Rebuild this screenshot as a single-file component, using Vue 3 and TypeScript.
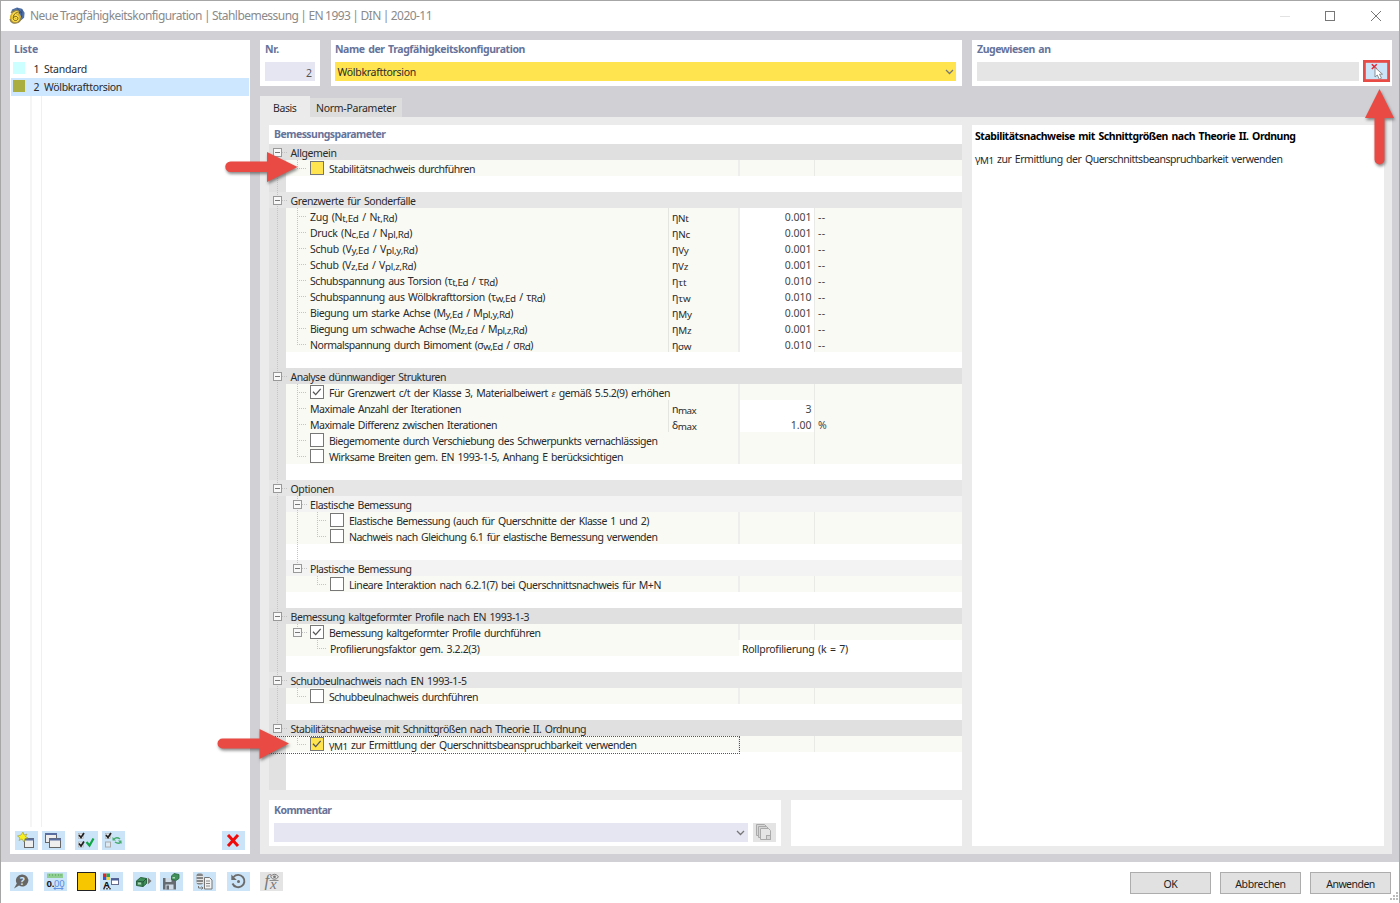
<script setup lang="ts">
interface Row {
  kind: 'head' | 'sub' | 'item' | 'blank'
  text?: string
  level?: number
  width?: number
  check?: 'off' | 'on' | 'yellow' | 'yellow-on'
  sym?: string
  symW?: number
  value?: string
  unit?: string
  choice?: string
  focus?: boolean
  dark?: boolean
}

const blank: Row = { kind: 'blank' }
const lim = (text: string, width: number, sym: string, symW: number, value: string): Row =>
  ({ kind: 'item', level: 1, text, width, sym, symW, value, unit: '--' })

const rows: Row[] = [
  { kind: 'head', text: 'Allgemein', width: 46, dark: true },
  { kind: 'item', level: 1, text: 'Stabilitätsnachweis durchführen', width: 146, check: 'yellow' },
  blank,
  { kind: 'head', text: 'Grenzwerte für Sonderfälle', width: 125 },
  lim('Zug (N_{t,Ed} / N_{t,Rd})', 87, 'η_{Nt}', 16.5, '0.001'),
  lim('Druck (N_{c,Ed} / N_{pl,Rd})', 102, 'η_{Nc}', 18, '0.001'),
  lim('Schub (V_{y,Ed} / V_{pl,y,Rd})', 107.5, 'η_{Vy}', 16.5, '0.001'),
  lim('Schub (V_{z,Ed} / V_{pl,z,Rd})', 106, 'η_{Vz}', 16, '0.001'),
  lim('Schubspannung aus Torsion (τ_{t,Ed} / τ_{Rd})', 187.5, 'η_{τt}', 14.5, '0.010'),
  lim('Schubspannung aus Wölbkrafttorsion (τ_{w,Ed} / τ_{Rd})', 235, 'η_{τw}', 18.5, '0.010'),
  lim('Biegung um starke Achse (M_{y,Ed} / M_{pl,y,Rd})', 203, 'η_{My}', 20, '0.001'),
  lim('Biegung um schwache Achse (M_{z,Ed} / M_{pl,z,Rd})', 217, 'η_{Mz}', 19.5, '0.001'),
  lim('Normalspannung durch Bimoment (σ_{w,Ed} / σ_{Rd})', 223, 'η_{σw}', 19, '0.010'),
  blank,
  { kind: 'head', text: 'Analyse dünnwandiger Strukturen', width: 155.5, dark: true },
  { kind: 'item', level: 1, text: 'Für Grenzwert c/t der Klasse 3, Materialbeiwert ~ gemäß 5.5.2(9) erhöhen', width: 341, check: 'on' },
  { kind: 'item', level: 1, text: 'Maximale Anzahl der Iterationen', width: 151, sym: 'n_{max}', symW: 24, value: '3', unit: '' },
  { kind: 'item', level: 1, text: 'Maximale Differenz zwischen Iterationen', width: 187, sym: 'δ_{max}', symW: 24.5, value: '1.00', unit: '%' },
  { kind: 'item', level: 1, text: 'Biegemomente durch Verschiebung des Schwerpunkts vernachlässigen', width: 328.5, check: 'off' },
  { kind: 'item', level: 1, text: 'Wirksame Breiten gem. EN 1993-1-5, Anhang E berücksichtigen', width: 294, check: 'off' },
  blank,
  { kind: 'head', text: 'Optionen', width: 43.5 },
  { kind: 'sub', text: 'Elastische Bemessung', width: 101.5 },
  { kind: 'item', level: 2, text: 'Elastische Bemessung (auch für Querschnitte der Klasse 1 und 2)', width: 300, check: 'off' },
  { kind: 'item', level: 2, text: 'Nachweis nach Gleichung 6.1 für elastische Bemessung verwenden', width: 308.5, check: 'off' },
  blank,
  { kind: 'sub', text: 'Plastische Bemessung', width: 101.5 },
  { kind: 'item', level: 2, text: 'Lineare Interaktion nach 6.2.1(7) bei Querschnittsnachweis für M+N', width: 312, check: 'off' },
  blank,
  { kind: 'head', text: 'Bemessung kaltgeformter Profile nach EN 1993-1-3', width: 238.5, dark: true },
  { kind: 'item', level: 1, text: 'Bemessung kaltgeformter Profile durchführen', width: 211.5, check: 'on' },
  { kind: 'item', level: 2, text: 'Profilierungsfaktor gem. 3.2.2(3)', width: 149.5, choice: 'Rollprofilierung (k = 7)' },
  blank,
  { kind: 'head', text: 'Schubbeulnachweis nach EN 1993-1-5', width: 176 },
  { kind: 'item', level: 1, text: 'Schubbeulnachweis durchführen', width: 149, check: 'off' },
  blank,
  { kind: 'head', text: 'Stabilitätsnachweise mit Schnittgrößen nach Theorie II. Ordnung', width: 295.5, dark: true },
  { kind: 'item', level: 1, text: 'γ_{M1} zur Ermittlung der Querschnittsbeanspruchbarkeit verwenden', width: 307.5, check: 'yellow-on', focus: true },
]

interface Part { t: string; c: string }
const parts = (s: string): Part[] =>
  s.split(/(_\{[^}]*\}|~)/).filter(Boolean).map((p) =>
    p === '~' ? { t: 'ε', c: 'eps' } : p.startsWith('_{') ? { t: p.slice(2, -1), c: 'low' } : { t: p, c: '' })

// Spreads or tightens the letters of a label so that it takes the given width.
const vFit = {
  mounted(el: HTMLElement, b: { value?: number }) {
    if (!b.value) return
    const n = (el.textContent ?? '').length
    const w = el.getBoundingClientRect().width
    el.style.letterSpacing = `${(b.value - w) / n}px`
  },
}

// Tree geometry, measured from the top left corner of the table (16 px rows).
const expanders = [
  [4, 0], [4, 3], [4, 14], [4, 21], [24, 22], [24, 26], [4, 29], [24, 30], [4, 33], [4, 36],
].map(([x, r]) => ({ x, y: r * 16 + 4 }))
const branches = [
  ...[1, 4, 5, 6, 7, 8, 9, 10, 11, 12, 15, 16, 17, 18, 19, 34, 37].map((r) => ({ x: 28, r })),
  ...[23, 24, 27, 31].map((r) => ({ x: 48, r })),
]
const trunks = [
  [28, 1, 1], [28, 4, 12], [28, 15, 19], [28, 22, 26], [28, 30, 30], [48, 23, 24], [48, 27, 27], [48, 31, 31], [28, 34, 34], [28, 37, 37],
]
</script>

<template>
  <div class="win">
    <header class="title">
      <svg class="logo" width="18" height="18" viewBox="0 0 18 18">
        <path d="M3 6 4 2.500 9 .6l5 1.200 2.600 4-.5 5-3 2.500-1-5-3-3z" fill="#4f71a8" />
        <path d="M5 3.500l8 2.500M9 1.500l5 4.500M14 2.500l-.5 8" stroke="#2d4878" stroke-width=".8" />
        <path d="M10.500 3.500C4 4 1.500 7.500 2 12c.8 4 4.500 5 8 3.500 3.500-1.700 4-6.500 1-8.500z" fill="#d8b02c" />
        <path d="M2 12c.8 4 4.500 5 8 3.500 2-1 3-3 3-5M3 6c1.500-2 4-3 7-2.500" fill="none" stroke="#8d8052" stroke-width="1.300" />
        <path d="M9.500 5.500C6.500 6 5 8.500 5.200 11.500c.3 2.800 4.600 2.700 4.700 0 0-2.600-3.500-2.800-4.500-.6" fill="none" stroke="#ffe04a" stroke-width="2.800" />
        <path d="M9.500 5.500C6.500 6 5 8.500 5.200 11.500c.3 2.800 4.600 2.700 4.700 0 0-2.600-3.500-2.800-4.500-.6" fill="none" stroke="#6b5618" stroke-width="1" />
      </svg>
      <span class="title-text"><span v-fit="402">Neue Tragfähigkeitskonfiguration | Stahlbemessung | EN 1993 | DIN | 2020-11</span></span>
      <svg class="winbtns" width="110" height="14" viewBox="0 0 110 14">
        <path d="M0 7.500h10" stroke="#e2e2e2" />
        <rect x="45.500" y="2.500" width="9" height="9" fill="none" stroke="#777" />
        <path d="M91 2l10 10M101 2L91 12" stroke="#777" />
      </svg>
    </header>

    <div class="body">
      <aside class="card list">
        <h2 v-fit="24">Liste</h2>
        <div class="list-row"><i class="swatch cyan" /><b>1</b><span v-fit="43">Standard</span></div>
        <div class="list-row selected"><i class="swatch olive" /><b>2</b><span v-fit="78">Wölbkrafttorsion</span></div>
        <div class="list-space" />
        <div class="list-tools">
          <span class="tool">
            <svg viewBox="0 0 23 19"><rect x="9.500" y="7.500" width="9" height="9" fill="#eee" stroke="#666" /><path d="M9 8.500h10" stroke="#5a6f9f" stroke-width="2" /><path d="M8 1l1 3 3-1-1.500 2.500L13 7l-3 .5L9 11 7 8 4 9.500 5 7 2.500 5 6 4z" fill="#f7ef20" stroke="#9a9838" stroke-width=".6" /></svg>
          </span>
          <span class="tool">
            <svg viewBox="0 0 23 19"><rect x="3.500" y="2.500" width="11" height="9" fill="#eee" stroke="#666" /><path d="M3 3h12" stroke="#5a6f9f" stroke-width="2" /><rect x="7.500" y="7.500" width="11" height="9" fill="#eee" stroke="#666" /><path d="M7 8.500h12" stroke="#5a6f9f" stroke-width="2" /></svg>
          </span>
          <span class="tool gap">
            <svg viewBox="0 0 23 19"><rect x="3.500" y="2.500" width="5" height="5" fill="#e8eef3" stroke="#aaa" stroke-width=".6" /><rect x="3.500" y="11" width="5" height="5" fill="#e8eef3" stroke="#aaa" stroke-width=".6" /><path d="M4 4l2 2.500L9 2M4 12.500l2 2.500 3-4.500" fill="none" stroke="#222" stroke-width="1.700" /><path d="M11.500 11l3 3.500 4-7" fill="none" stroke="#12a546" stroke-width="2.200" /></svg>
          </span>
          <span class="tool">
            <svg viewBox="0 0 23 19"><rect x="3.500" y="2.500" width="5" height="5" fill="#e8eef3" stroke="#aaa" stroke-width=".6" /><path d="M4 4l2 2.500L9 2" fill="none" stroke="#222" stroke-width="1.700" /><rect x="3.500" y="11" width="5" height="5" fill="#ddeaf4" stroke="#aaa" /><path d="M12 8c2-2 4-1.500 6 0M19 11c-2 2-4 1.500-6 0" fill="none" stroke="#46ab6d" stroke-width="1.500" /><path d="M10.500 6v3.500h3.500zM19.500 13V9.500H16z" fill="#46ab6d" /></svg>
          </span>
          <span class="tool last">
            <svg viewBox="0 0 23 19"><path d="M6 4l10 11M16 4L6 15" stroke="#f00a0a" stroke-width="3" /></svg>
          </span>
        </div>
      </aside>

      <main class="main">
        <div class="top">
          <section class="card nr"><h2 v-fit="14">Nr.</h2><div class="field num">2</div></section>
          <section class="card name">
            <h2 v-fit="190">Name der Tragfähigkeitskonfiguration</h2>
            <div class="field combo"><span v-fit="78.500">Wölbkrafttorsion</span>
              <svg width="9" height="6" viewBox="0 0 9 6"><path d="M1 1l3.500 3.500L8 1" fill="none" stroke="#777" stroke-width="1.300" /></svg>
            </div>
          </section>
          <section class="card assigned">
            <h2 v-fit="73.500">Zugewiesen an</h2>
            <div class="assign-row">
              <div class="field grey" />
              <span class="pick">
                <svg width="21" height="16" viewBox="0 0 21 16"><path d="M5.800 1.300l5 4.700M10.800 1.300l-5 4.700" stroke="#e8232f" stroke-width="1.500" /><path d="M9 4.500V14l2.300-2 2 4.200 2.200-1-2-4h3z" fill="#fff" stroke="#858585" stroke-width=".9" /></svg>
              </span>
            </div>
          </section>
        </div>

        <nav class="tabs">
          <span class="tab active"><span v-fit="23.500">Basis</span></span>
          <span class="tab"><span v-fit="80">Norm-Parameter</span></span>
        </nav>

        <div class="content">
          <div class="left">
            <section class="params">
              <h2 v-fit="111.500">Bemessungsparameter</h2>
              <div class="table">
                <div v-for="(r, i) in rows" :key="i" class="row" :class="[r.kind, { dark: r.dark, focus: r.focus }]">
                  <div class="gutter" />
                  <div class="label" :class="['lv' + (r.level ?? 0), { checked: r.check }]">
                    <span v-if="r.check" class="box" :class="r.check">
                      <svg v-if="r.check.endsWith('on')" width="12" height="12" viewBox="0 0 12 12"><path d="M2 5.700l2.700 2.900 5-5.800" fill="none" stroke="#555" stroke-width="1.300" /></svg>
                    </span>
                    <span v-if="r.text" v-fit="r.width" class="txt"><span v-for="(p, k) in parts(r.text)" :key="k" :class="p.c">{{ p.t }}</span></span>
                  </div>
                  <template v-if="r.kind === 'item'">
                    <div v-if="r.sym" class="sym"><span v-fit="r.symW" class="txt"><span v-for="(p, k) in parts(r.sym)" :key="k" :class="p.c">{{ p.t }}</span></span></div>
                    <div v-if="r.choice" class="choice"><span v-fit="106">{{ r.choice }}</span></div>
                    <template v-else>
                      <div class="val" :class="{ filled: r.value }">{{ r.value }}</div>
                      <div class="unit" :class="{ dashes: r.unit === '--' }">{{ r.unit }}</div>
                    </template>
                  </template>
                </div>
                <div class="rest"><div class="gutter" /></div>
                <svg class="tree" width="60" height="646">
                  <g class="dots">
                    <path d="M8.500 8V585" />
                    <path v-for="(t, i) in trunks" :key="'t' + i" :d="`M${t[0] + 0.5} ${t[1] * 16}V${t[2] * 16 + 8}`" />
                    <path v-for="(b, i) in branches" :key="'b' + i" :d="`M${b.x} ${b.r * 16 + 8.5}h10`" />
                    <path v-for="(e, i) in expanders" :key="'h' + i" :d="`M${e.x + 9} ${e.y + 4.5}h5`" />
                  </g>
                  <g v-for="(e, i) in expanders" :key="i">
                    <rect :x="e.x + 0.5" :y="e.y + 0.5" width="8" height="8" fill="#f8f8f8" stroke="#999" />
                    <path :d="`M${e.x + 2} ${e.y + 4.5}h5`" stroke="#777" />
                  </g>
                </svg>
              </div>
            </section>
            <div class="lower">
              <section class="comment">
                <h2 v-fit="57.500">Kommentar</h2>
                <div class="comment-row">
                  <div class="field lilac"><svg width="9" height="6" viewBox="0 0 9 6"><path d="M1 1l3.500 3.500L8 1" fill="none" stroke="#777" stroke-width="1.300" /></svg></div>
                  <span class="tool off">
                    <svg viewBox="0 0 23 19"><g fill="#d6d6d6" stroke="#aaa"><path d="M3.500 1.500h8l2 2v9h-10z" /><path d="M5.500 3.500h8l2 2v9h-10z" /><path d="M7.500 5.500h8l2 2v9h-10z" fill="#e6e6e6" /><rect x="13.500" y="12.500" width="4" height="4" /></g></svg>
                  </span>
                </div>
              </section>
              <section class="preview" />
            </div>
          </div>
          <section class="info">
            <h3 v-fit="320.500">Stabilitätsnachweise mit Schnittgrößen nach Theorie II. Ordnung</h3>
            <p><span v-fit="307.500" class="txt">γ<span class="low">M1</span> zur Ermittlung der Querschnittsbeanspruchbarkeit verwenden</span></p>
          </section>
        </div>
      </main>
    </div>

    <footer class="foot">
      <span class="tool"><svg viewBox="0 0 23 19"><path d="M12.500 2.500a6 6 0 1 1-3.500 11L4 16.500l2.800-5A6 6 0 0 1 12.500 2.500z" fill="#666" /><text x="9.800" y="12.800" class="q">?</text></svg></span>
      <span class="tool m11"><svg viewBox="0 0 23 19"><rect x="3" y="1.500" width="16" height="4.500" fill="#8fce91" /><path d="M5.500 2v2M8.500 2v2M11.500 2v2M14.500 2v2M17 2v2" stroke="#5eaa65" stroke-width=".7" /><text x="2.500" y="14.500" class="dec">0.<tspan class="blue">00</tspan></text><path d="M10 16.500h9M11.500 15l-1.500 1.500 1.500 1.500M17.500 15l1.500 1.500-1.500 1.500" fill="none" stroke="#5a8ae0" stroke-width=".9" /></svg></span>
      <span class="color" />
      <span class="tool m4"><svg viewBox="0 0 23 19"><path d="M3 1.500h3.500V5H3z" fill="#e3262b" /><path d="M6.500 1.500H10V5H6.500z" fill="#2aa548" /><path d="M3 5h3.500v3H3z" fill="#3856d4" /><path d="M6.500 5H10v3H6.500z" fill="#f5da28" /><text x="3.500" y="15.500" class="ab">A</text><path d="M3 16.800h9" stroke="#222" stroke-dasharray="2 1" /><rect x="11.500" y="6.500" width="7" height="6" fill="#fff" stroke="#666c8c" /><path d="M11 7.500h8" stroke="#4c5f98" stroke-width="2" /></svg></span>
      <span class="tool m10"><svg viewBox="0 0 23 19"><path d="M3.500 9l4-3.500 6 1v5l-3.500 3-6.500-1z" fill="#3f9159" stroke="#2b6540" /><path d="M3.500 9l6.500 1v4.500M10 10l3.500-3.500" fill="none" stroke="#24553a" /><rect x="5" y="10.500" width="3" height="2" fill="#a9d6b5" /><path d="M14.800 5.500v7l3.700-3.500z" fill="#777" /></svg></span>
      <span class="tool m4"><svg viewBox="0 0 23 19"><path d="M3 6h10l3 3v8.500H3z" fill="#666b72" /><rect x="5.500" y="6" width="6" height="4" fill="#cfdce8" /><rect x="5.500" y="12.500" width="8" height="5" fill="#cfdce8" /><path d="M6.500 13.500H9v4H6.500z" fill="#666b72" /><path d="M11.500 4l2.500-2.500 5 1v4L16 8.500l-4.500-1z" fill="#3f9159" stroke="#2b6540" stroke-width=".8" /><rect x="12.500" y="5" width="2.500" height="1.500" fill="#a9d6b5" /></svg></span>
      <span class="tool m10"><svg viewBox="0 0 23 19"><rect x="3.500" y="1.500" width="6.500" height="11" rx="2" fill="#858585" /><path d="M3.500 4.500h6.500M3.500 7.500h6.500M3.500 10.500h6.500" stroke="#eee" stroke-width=".9" /><path d="M5.500 14v2h4.500M8.500 14.500l1.500 1.500-1.500 1.500" fill="none" stroke="#777" stroke-width="1" /><path d="M11.500 5.500h5l2.500 2.500v9h-7.500z" fill="#f3f3f3" stroke="#777" /><path d="M13 9h4M13 11.500h4M13 14h4" stroke="#888" stroke-width="1" /></svg></span>
      <span class="tool m11"><svg viewBox="0 0 23 19"><path d="M6.500 5A6.200 6.200 0 1 1 5.500 11.500" fill="none" stroke="#6b6b6b" stroke-width="1.900" /><path d="M4.300 2.500V8h5.500z" fill="#6b6b6b" /><circle cx="11.500" cy="9.500" r="1.500" fill="#6b6b6b" /></svg></span>
      <span class="tool off m10"><svg viewBox="0 0 23 19"><text x="4.500" y="14" class="fx">f</text><text x="10" y="16.500" class="fx small">x</text><path d="M10.500 4.800q4-5 8 0q-4 5-8 0z" fill="#e4e4e4" stroke="#777" /><circle cx="14.500" cy="4.800" r="1.400" fill="#777" /><path d="M9.500 8.500h9" stroke="#777" stroke-width=".8" /></svg></span>
      <div class="buttons">
        <button><span v-fit="14">OK</span></button>
        <button><span v-fit="50.500">Abbrechen</span></button>
        <button><span v-fit="48.500">Anwenden</span></button>
      </div>
      <svg class="grip" width="10" height="10"><path d="M7 0h2v2H7zM4 3h2v2H4zM7 3h2v2H7zM1 6h2v2H1zM4 6h2v2H4zM7 6h2v2H7z" fill="#bcbcbc" /></svg>
    </footer>

    <svg class="arrows" width="1400" height="903">
      <rect x="1364.400" y="61.400" width="24.200" height="19.200" fill="none" stroke="#e84a45" stroke-width="2.800" />
      <g fill="#e94b44">
        <path d="M297.500 167L267 152v9.500h-36.500a5 5 0 0 0 0 10.500H267v10z" />
        <path d="M289 743.500L259.500 729v9.500h-37a5 5 0 0 0 0 10h37v10.500z" />
        <path d="M1379.500 89L1365 118h9.500v41.500a5 5 0 0 0 10 0V118h9.500z" />
      </g>
    </svg>
  </div>
</template>

<style>
body { margin: 0; background: #fff; overflow: hidden; }
</style>

<style scoped>
* { box-sizing: border-box; }
.win { width: 1400px; height: 903px; position: relative; display: flex; flex-direction: column; background: #fff; font: 10.5px/16px "Noto Sans", "Open Sans", sans-serif; word-spacing: 1.2px; color: #2a2a2a; border: 1px solid #a6a6a6; border-bottom: 0; overflow: hidden; white-space: nowrap; }
.title { height: 30px; flex: none; display: flex; align-items: center; padding-left: 7px; }
.logo { flex: none; }
.title-text { margin-left: 4px; font-size: 12px; color: #8a8a8a; flex: 1; word-spacing: -.6px; }
.winbtns { flex: none; margin-right: 9px; margin-top: -1px; }
.title-text > span, .list-row > span, .combo > span, .tab > span, .choice > span, button > span, .txt { display: inline-block; white-space: pre; }
.body { height: 831px; flex: none; display: flex; gap: 10px; background: #d1d0d5; padding: 9px 7px 8px 9px; }
.card, .params, .comment, .preview, .info { background: #fff; }
h2 { margin: 0; font-size: 10.5px; line-height: 16px; font-weight: 700; color: #66739a; width: max-content; }
.list { width: 240px; flex: none; display: flex; flex-direction: column; padding-top: 1px; }
.list h2 { margin-left: 4px; margin-bottom: 3px; }
.list-row { height: 18px; display: flex; align-items: center; margin: 0 1px; line-height: 18px; }
.list-row.selected { background: #cce7ff; }
.swatch { width: 12px; height: 12px; margin: -2px 0 0 2px; }
.cyan { background: #ccffff; }
.olive { background: #aaad3f; }
.list-row b { font-weight: 400; width: 14.5px; text-align: right; }
.list-row span { margin-left: 4.5px; }
.list-space { flex: 1; margin-left: 20px; width: 12px; border-left: 2px solid #f5f5f5; border-right: 1px solid #f0f0f0; margin-bottom: 4px; }
.list-tools { display: flex; gap: 4px; padding: 0 5px 4px 5px; }
.tool { width: 23px; height: 19px; background: #cce4f7; flex: none; display: block; }
.tool svg { display: block; width: 23px; height: 19px; }
.tool.off { background: #e4e4e4; }
.gap { margin-left: 6px; }
.last { margin-left: auto; }
.main { flex: 1; display: flex; flex-direction: column; min-width: 0; }
.top { display: flex; height: 46px; flex: none; }
.card.nr { width: 60px; padding: 1px 5px; }
.card.name { width: 631px; margin-left: 11px; padding: 1px 6px 1px 4px; }
.card.assigned { width: 420px; margin-left: 10px; padding: 1px 3px 1px 5px; }
.field { height: 19px; line-height: 22px; }
.top .field { margin-top: 5px; }
.num { background: #e6e6f2; text-align: right; padding-right: 3px; color: #555; }
.combo { background: #ffe44f; display: flex; align-items: center; justify-content: space-between; padding: 0 2px 0 2.5px; }
.combo > span { padding-top: 1px; }
.assign-row { display: flex; gap: 6px; }
.grey { background: #e5e5e5; width: 382px; }
.pick { margin-top: 5px; width: 23px; height: 18px; background: #cce4f7; padding: 1px 0 0 1px; }
.tabs { height: 21px; margin-top: 10px; display: flex; align-items: flex-end; }
.tab { width: 92px; height: 19px; background: #dedddd; padding-left: 6px; line-height: 20px; }
.tab.active { width: 50px; height: 21px; background: #ebebeb; padding-left: 13px; line-height: 24px; }
.content { flex: 1; background: #ebebeb; display: flex; gap: 10px; padding: 8px 8px 8px 9px; }
.left { width: 693px; display: flex; flex-direction: column; gap: 10px; }
.params { height: 665px; }
.params h2 { margin-left: 5px; height: 19px; line-height: 18px; }
.table { position: relative; height: 646px; display: flex; flex-direction: column; }
.row { height: 16px; display: flex; line-height: 19px; position: relative; }
.gutter { width: 17px; background: #e1e1e1; flex: none; }
.head, .head .gutter { background: #e6e6e6; }
.head.dark, .head.dark .gutter { background: #e0e0e0; }
.sub { background: #f3f3f3; }
.item { background: #f9faf4; }
.rest { flex: 1; display: flex; }
.label { flex: 1; display: flex; padding-left: 4.5px; }
.sub .label { padding-left: 24px; }
.item .label { padding-left: 24px; }
.item .label.lv2 { padding-left: 44px; }
.box { width: 14px; height: 14px; border: 1px solid #777; background: #fff; margin: 1px 5px 0 0; flex: none; }
.box svg { display: block; }
.yellow, .yellow-on { background: #ffe44f; }
.low { font-size: 9.8px; position: relative; top: 1px; }
.eps { font-family: "Liberation Serif", serif; font-style: italic; }
.sym { width: 70px; border-left: 1px solid #e4e4e1; padding-left: 3px; }
.val { width: 77px; border-left: 2px solid #eeeeec; border-right: 1px solid #e9e9e6; text-align: right; padding-right: 2.5px; color: #444; }
.val.filled { background: #fff; }
.unit { width: 147px; padding-left: 3px; color: #444; }
.dashes { letter-spacing: .4px; }
.choice { width: 223px; padding-left: 3px; background: #fff; }
.focus::after { content: ""; position: absolute; left: 0; top: 0; width: 470px; height: 16px; border: 1px dotted #555; border-left: 0; }
.tree { position: absolute; left: 0; top: 0; }
.dots path { fill: none; stroke: #c4c4c4; stroke-dasharray: 1 1; }
.lower { display: flex; gap: 10px; height: 46px; }
.comment { width: 512px; padding: 2px 5px; }
.comment-row { display: flex; gap: 5px; margin-top: 5px; }
.lilac { width: 474px; background: #e6e6f2; display: flex; align-items: center; justify-content: flex-end; padding-right: 3px; }
.preview { flex: 1; }
.info { width: 412px; padding: 3px; }
.info h3 { margin: 0; font-size: 10.5px; line-height: 16px; font-weight: 700; color: #000; width: max-content; }
.info p { margin: 7px 0 0; }
.foot { flex: 1; display: flex; padding: 10px 9px 0 9px; position: relative; }
.m4 { margin-left: 4px; }
.m10 { margin-left: 10px; }
.m11 { margin-left: 11px; }
.color { width: 19px; height: 19px; background: #f7c600; border: 1px solid #222; margin-left: 10px; }
.q { font: 700 10.5px "Noto Sans", sans-serif; fill: #cce4f7; }
.dec { font: 700 9.5px "Noto Sans", sans-serif; fill: #222; letter-spacing: -.3px; }
.blue { fill: #5a8ae0; font-weight: 400; }
.ab { font: 700 9px "Noto Sans", sans-serif; fill: #111; }
.fx { font: italic 17px "Liberation Serif", serif; fill: #777; }
.fx.small { font-size: 15px; }
.buttons { margin-left: auto; display: flex; gap: 9px; margin-right: -1px; }
button { width: 81px; height: 22px; border: 1px solid #adadad; background: #e1e1e1; font: inherit; line-height: 22px; color: #222; padding: 0; border-radius: 0; text-align: center; }
.grip { position: absolute; right: 0; bottom: 1px; }
.arrows { position: absolute; left: -1px; top: -1px; pointer-events: none; }
.arrows g { filter: drop-shadow(1px 2px 1.5px rgba(60, 60, 60, .6)); }
</style>
